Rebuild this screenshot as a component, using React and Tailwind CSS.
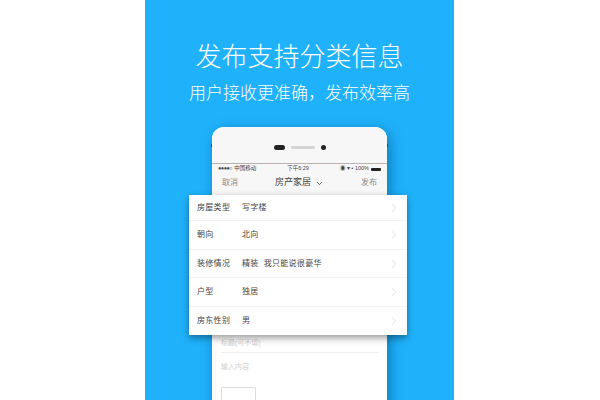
import { ChevronRight, ChevronDown } from 'lucide-react';

const rows = [
  ['房屋类型', '写字楼'],
  ['朝向', '北向'],
  ['装修情况', '精装  我只能说很豪华'],
  ['户型', '独居'],
  ['房东性别', '男'],
];

const font = "font-['Liberation_Sans','Noto_Sans_CJK_SC',sans-serif]";

export default function App() {
  return (
    <div className={`flex h-[400px] w-[600px] justify-center overflow-hidden bg-white ${font}`}>
      <div className="ml-[-1px] flex h-[400px] w-[309px] shrink-0 flex-col items-center overflow-hidden bg-[#1fb2fb]">
        <h1 className="mt-[40px] text-[26px] leading-[34px] font-light whitespace-nowrap text-white">发布支持分类信息</h1>
        <p className="mt-[7px] text-[17px] leading-[26px] font-light whitespace-nowrap text-white">用户接收更准确{'\uFF0C'}发布效率高</p>

        <div className="relative mt-[20px] h-[280px] w-[175px] shrink-0 rounded-t-[12px] bg-white shadow-[3px_4px_14px_rgba(0,50,100,0.45)]">
          <span className="absolute top-[17px] left-[-1px] h-[3px] w-[1px] bg-[#444]" />
          <span className="absolute top-[17px] right-[-1px] h-[3px] w-[1px] bg-[#444]" />
          <div className="flex h-[36px] items-center justify-center gap-[6px] rounded-t-[12px] bg-[#f8f7f8] pt-[4px]">
            <span className="h-[5px] w-[11px] rounded-full bg-[#222]" />
            <span className="h-[3px] w-[24px] rounded-full bg-[#d5d3d3]" />
            <span className="h-[5px] w-[5px] rounded-full bg-[#222]" />
          </div>
          <div className="flex h-[11px] items-center justify-between border-t border-[#b9b2b0] bg-[#f8f7f8] px-[6px] text-[5.5px] leading-none text-[#444]">
            <span className="flex items-center gap-[2px]">
              <span className="tracking-[-0.5px]">●●●●○</span>
              <span>中国移动</span>
            </span>
            <span>下午6:29</span>
            <span className="flex items-center gap-[2px]">
              <span>◉ ▾ ▪ 100%</span>
              <span className="h-[3px] w-[10px] rounded-[1px] bg-[#222]" />
            </span>
          </div>
          <div className="flex h-[21px] items-center justify-between bg-[#f8f7f8] px-[10px] pb-[3px] text-[8px] text-[#8a8a8a]">
            <span>取消</span>
            <span className="flex items-center gap-[4px] text-[9px] text-[#444]">
              房产家居
              <ChevronDown className="h-[9px] w-[9px] text-[#333]" strokeWidth={2} />
            </span>
            <span>发布</span>
          </div>

          <div className="relative mr-[-20px] ml-[-23px] bg-white shadow-[0_3px_7px_rgba(0,0,0,0.4)]">
            {rows.map(([label, value]) => (
              <div key={label} className="flex h-[28.5px] items-center border-b border-[#f3f3f3] pt-[1px] pr-[6px] pl-[8px] text-[8px] text-[#444] first:h-[26px] first:pt-0 last:border-b-0">
                <span className="w-[45px] tracking-[0.3px]">{label}</span>
                <span className="flex-1 tracking-[0.3px] whitespace-pre">{value}</span>
                <ChevronRight className="h-[14px] w-[14px] text-[#dcdcdc]" strokeWidth={1.5} />
              </div>
            ))}
          </div>

          <div className="px-[9px] text-[7px] text-[#cfcfcf]">
            <div className="flex h-[18px] items-center border-b border-[#eeeeee]">标题(可不填)</div>
            <div className="flex h-[29px] items-center">输入内容</div>
            <div className="mt-[5px] h-[30px] w-[35px] rounded-[1px] border border-[#dddddd]" />
          </div>
        </div>
      </div>
    </div>
  );
}
